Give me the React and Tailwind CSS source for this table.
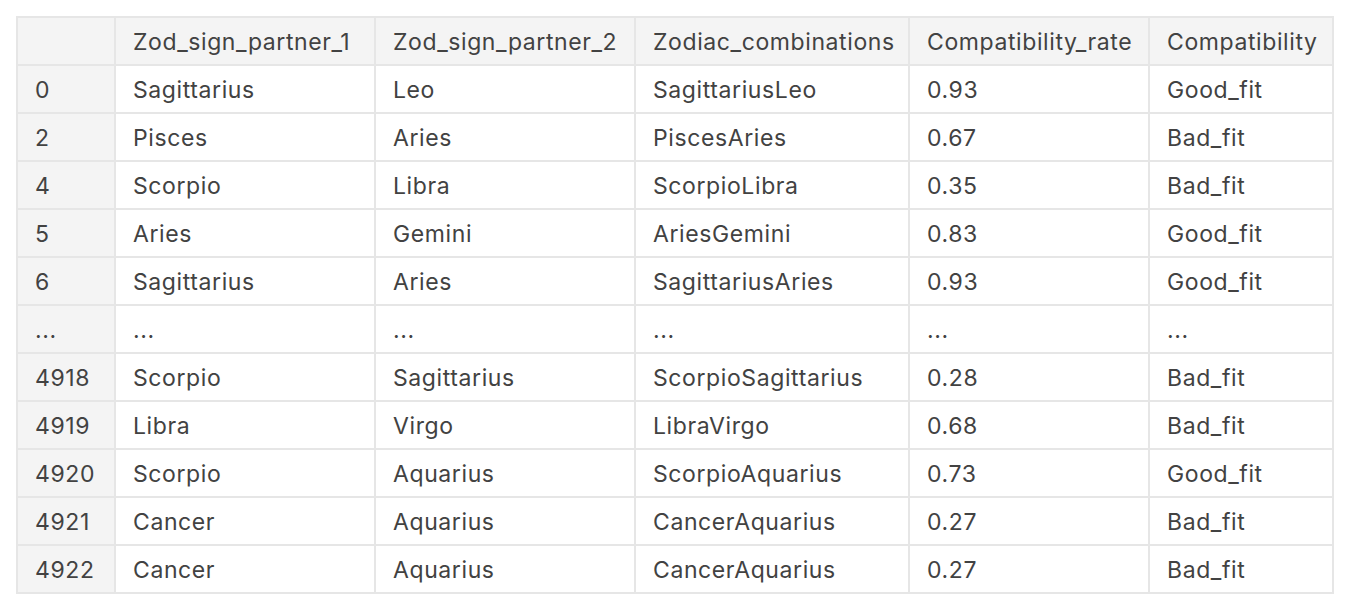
import React from "react";

const columns = [
  "",
  "Zod_sign_partner_1",
  "Zod_sign_partner_2",
  "Zodiac_combinations",
  "Compatibility_rate",
  "Compatibility",
];

const rows = [
  ["0", "Sagittarius", "Leo", "SagittariusLeo", "0.93", "Good_fit"],
  ["2", "Pisces", "Aries", "PiscesAries", "0.67", "Bad_fit"],
  ["4", "Scorpio", "Libra", "ScorpioLibra", "0.35", "Bad_fit"],
  ["5", "Aries", "Gemini", "AriesGemini", "0.83", "Good_fit"],
  ["6", "Sagittarius", "Aries", "SagittariusAries", "0.93", "Good_fit"],
  ["...", "...", "...", "...", "...", "..."],
  ["4918", "Scorpio", "Sagittarius", "ScorpioSagittarius", "0.28", "Bad_fit"],
  ["4919", "Libra", "Virgo", "LibraVirgo", "0.68", "Bad_fit"],
  ["4920", "Scorpio", "Aquarius", "ScorpioAquarius", "0.73", "Good_fit"],
  ["4921", "Cancer", "Aquarius", "CancerAquarius", "0.27", "Bad_fit"],
  ["4922", "Cancer", "Aquarius", "CancerAquarius", "0.27", "Bad_fit"],
];

export default function App() {
  return (
    <div className="min-h-screen bg-white p-4 font-['Inter',sans-serif] text-[23px] tracking-[0.6px] text-[#424242]">
      <div className="grid w-[1318px] grid-cols-[96px_258px_258px_272px_238px_182px] gap-[2px] bg-[#e6e6e6] p-[2px]">
        {columns.map((c, i) => (
          <div key={"h" + i} className="flex h-[46px] items-center bg-[#f4f4f4] pl-[17px] pr-4 pt-[2px] whitespace-nowrap">
            {c}
          </div>
        ))}
        {rows.map((r, ri) =>
          r.map((cell, ci) => (
            <div
              key={ri + "-" + ci}
              className={`flex h-[46px] items-center pl-[17px] pr-4 pt-[2px] whitespace-nowrap ${
                ci === 0 ? "bg-[#f4f4f4]" : "bg-white"
              }`}
            >
              {cell}
            </div>
          ))
        )}
      </div>
    </div>
  );
}
